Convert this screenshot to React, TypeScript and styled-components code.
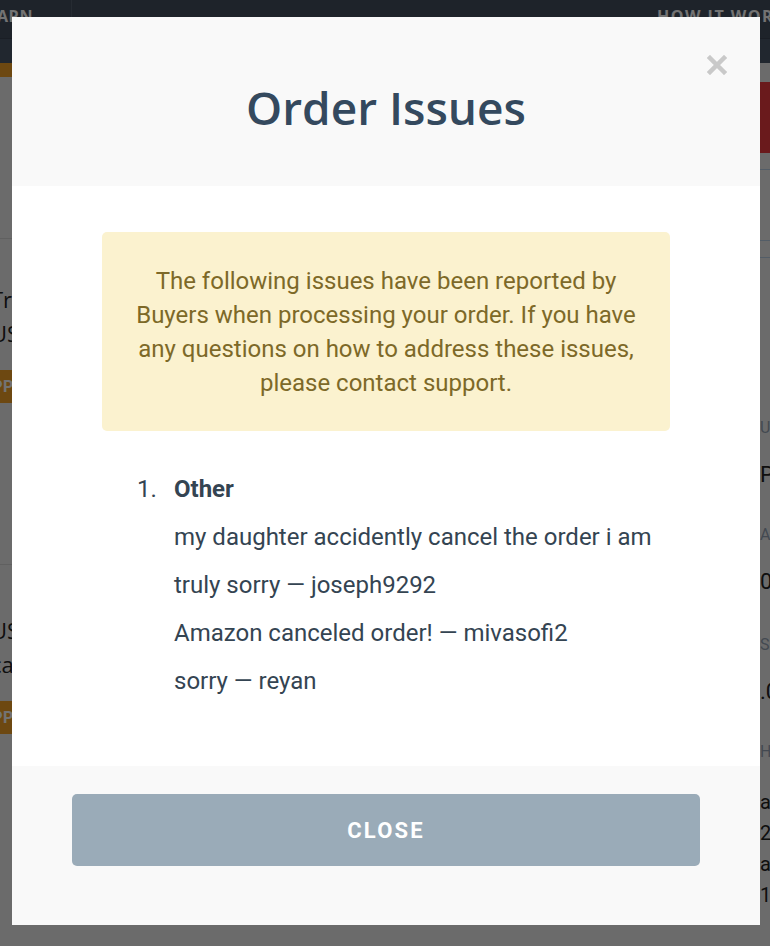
import React from 'react'
import styled, { createGlobalStyle } from 'styled-components'

const GlobalStyle = createGlobalStyle`
  html, body {
    margin: 0;
    padding: 0;
    overflow: hidden;
  }
  body {
    width: 770px;
    height: 946px;
    background: #eeeeee;
    font-family: Roboto, "Liberation Sans", sans-serif;
  }
`

/* ---------- page behind the dialog ---------- */

const Page = styled.div`
  width: 1000px;
  min-height: 946px;
  margin-left: -22px;
  background: #eeeeee;
`

const TopBar = styled.div`
  display: flex;
  height: 38px;
  background: #434e5d;
  border-bottom: 1px solid #3a4452;
  font-family: 'Open Sans', sans-serif;
  font-weight: 700;
  font-size: 16px;
  letter-spacing: 1.5px;
  color: #ffffff;
`

const NavItem = styled.div<{ $divider?: boolean; $offset?: number }>`
  display: flex;
  align-items: center;
  padding-bottom: 6px;
  box-sizing: border-box;
  width: ${(p) => (p.$divider ? '94px' : 'auto')};
  margin-left: ${(p) => p.$offset || 0}px;
  border-right: ${(p) => (p.$divider ? '1px solid #55606f' : 'none')};
  letter-spacing: ${(p) => (p.$divider ? '0.5px' : 'inherit')};
  white-space: nowrap;
`

const SubBar = styled.div`
  height: 24px;
  background: #4b5768;
`

const Main = styled.div`
  display: grid;
  grid-template-columns: 764px 1fr;
`

const Feed = styled.div`
  display: flex;
  flex-direction: column;
`

const FeedTop = styled.div`
  height: 175px;
`

const Strip = styled.div`
  width: 60px;
  height: 14px;
  margin-left: 18px;
  background: #f2a126;
`

const Card = styled.div<{ $pad: number }>`
  height: 326px;
  padding: ${(p) => p.$pad}px 0 0 13px;
  box-sizing: border-box;
  border-top: 1px solid #d6d6d6;
`

const CardText = styled.div`
  font-family: 'Open Sans', sans-serif;
  font-size: 22px;
  line-height: 34px;
  color: #222222;
  white-space: nowrap;
`

const Badge = styled.div`
  display: inline-flex;
  align-items: center;
  height: 33px;
  margin: 20px 0 0 -20px;
  padding: 0 10px;
  background: #f2a126;
  color: #ffffff;
  font-weight: 700;
  font-size: 16px;
  letter-spacing: 0.5px;
`

const Sidebar = styled.div`
  display: flex;
  flex-direction: column;
  padding: 19px 0 0 18px;
`

const RedButton = styled.div`
  height: 71px;
  margin-left: -20px;
  background: #ec3b3e;
`

const Rule = styled.div<{ $gap: number; $height?: number }>`
  margin-top: ${(p) => p.$gap}px;
  height: ${(p) => p.$height || 0}px;
  border-top: 1px solid #b9cfe4;
`

const Field = styled.div<{ $gap: number }>`
  margin-top: ${(p) => p.$gap}px;
  display: flex;
  flex-direction: column;
  white-space: nowrap;
`

const FieldLabel = styled.div`
  font-size: 16px;
  line-height: 24px;
  color: #95a3b3;
`

const FieldValue = styled.div`
  margin-top: 20px;
  font-size: 22px;
  line-height: 30px;
  color: #222222;
`

const InfoLines = styled.div`
  margin-top: 23px;
  font-size: 20px;
  line-height: 31px;
  color: #222222;
  white-space: nowrap;
`

/* ---------- dialog ---------- */

const Overlay = styled.div`
  position: fixed;
  inset: 0;
  padding: 17px 0 0 12px;
  background: rgba(0, 0, 0, 0.55);
`

const Modal = styled.div`
  width: 748px;
  height: 908px;
  display: flex;
  flex-direction: column;
  background: #ffffff;
`

const ModalHeader = styled.div`
  position: relative;
  height: 169px;
  padding-top: 10px;
  box-sizing: border-box;
  display: flex;
  align-items: center;
  justify-content: center;
  background: #f9f9f9;
`

const Title = styled.h2`
  margin: 0;
  font-family: 'Open Sans', sans-serif;
  font-weight: 600;
  font-size: 46px;
  color: #34495e;
`

const CloseIcon = styled.button`
  position: absolute;
  top: 38px;
  right: 33px;
  width: 20px;
  height: 20px;
  padding: 0;
  border: 0;
  background: none;
  display: flex;
`

const ModalBody = styled.div`
  flex: 1;
  padding: 46px 90px 0;
`

const Alert = styled.div`
  padding: 32px 30px 31px;
  border-radius: 5px;
  background: #fbf2cf;
  color: #7d6928;
  font-size: 24px;
  line-height: 34px;
  text-align: center;
`

const IssueList = styled.ol`
  margin: 34px 0 0 35px;
  padding: 0;
  list-style: none;
  color: #344452;
  font-size: 24px;
  line-height: 48px;
`

const Issue = styled.li`
  display: grid;
  grid-template-columns: 37px 1fr;
`

const IssueName = styled.div`
  font-weight: 700;
`

const ModalFooter = styled.div`
  height: 159px;
  padding: 28px 60px 0;
  box-sizing: border-box;
  background: #f9f9f9;
`

const CloseButton = styled.button`
  width: 100%;
  height: 72px;
  border: 0;
  border-radius: 5px;
  background: #9aabb8;
  color: #ffffff;
  font-family: Roboto, sans-serif;
  font-weight: 700;
  font-size: 22px;
  letter-spacing: 2.2px;
`

const comments = [
  'my daughter accidently cancel the order i am truly sorry — joseph9292',
  'Amazon canceled order! — mivasofi2',
  'sorry — reyan',
]

export default function App() {
  return (
    <>
      <GlobalStyle />
      <Page>
        <TopBar>
          <NavItem $divider>LEARN</NavItem>
          <NavItem $offset={585}>HOW IT WORKS</NavItem>
        </TopBar>
        <SubBar />
        <Main>
          <Feed>
            <FeedTop>
              <Strip />
            </FeedTop>
            <Card $pad={43}>
              <CardText>Tripod Stand for Phone</CardText>
              <CardText>USA only</CardText>
              <Badge>APPROVED</Badge>
            </Card>
            <Card $pad={48}>
              <CardText>USB charging cable</CardText>
              <CardText>can ship worldwide</CardText>
              <Badge>APPROVED</Badge>
            </Card>
          </Feed>
          <Sidebar>
            <RedButton />
            <Rule $gap={16} />
            <Rule $gap={70} $height={16} />
            <Rule $gap={0} $height={69} />
            <Field $gap={89}>
              <FieldLabel>Unit price</FieldLabel>
              <FieldValue>Paid by buyer</FieldValue>
            </Field>
            <Field $gap={33}>
              <FieldLabel>Amount</FieldLabel>
              <FieldValue>0.00</FieldValue>
            </Field>
            <Field $gap={36}>
              <FieldLabel>Shipping</FieldLabel>
              <FieldValue>.00</FieldValue>
            </Field>
            <Field $gap={33}>
              <FieldLabel>How to order</FieldLabel>
            </Field>
            <InfoLines>
              <div>a</div>
              <div>2</div>
              <div>a</div>
              <div>1</div>
            </InfoLines>
          </Sidebar>
        </Main>
      </Page>

      <Overlay>
        <Modal>
          <ModalHeader>
            <Title>Order Issues</Title>
            <CloseIcon aria-label="Close">
              <svg width="20" height="20" viewBox="0 0 20 20">
                <path
                  d="M3 3 L17 17 M17 3 L3 17"
                  stroke="#c9c9c9"
                  strokeWidth="4.5"
                  strokeLinecap="square"
                />
              </svg>
            </CloseIcon>
          </ModalHeader>
          <ModalBody>
            <Alert>
              The following issues have been reported by Buyers when processing your order. If you
              have any questions on how to address these issues, please contact support.
            </Alert>
            <IssueList>
              <Issue>
                <span>1.</span>
                <div>
                  <IssueName>Other</IssueName>
                  {comments.map((c) => (
                    <div key={c}>{c}</div>
                  ))}
                </div>
              </Issue>
            </IssueList>
          </ModalBody>
          <ModalFooter>
            <CloseButton>CLOSE</CloseButton>
          </ModalFooter>
        </Modal>
      </Overlay>
    </>
  )
}
